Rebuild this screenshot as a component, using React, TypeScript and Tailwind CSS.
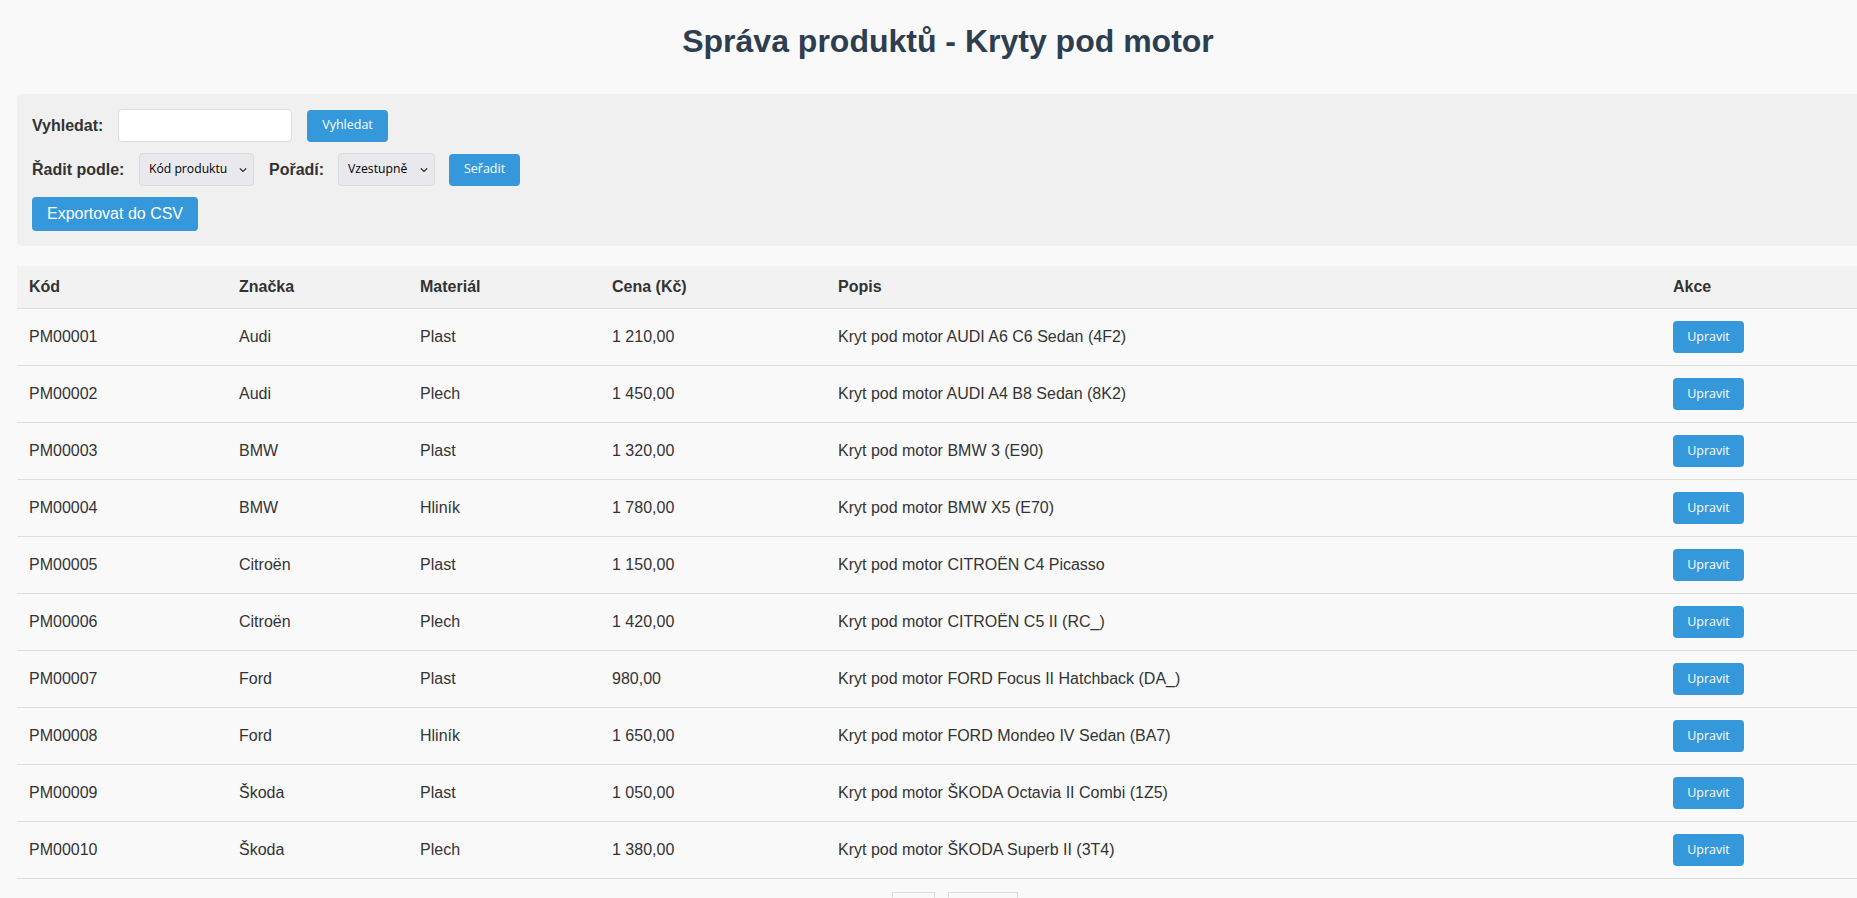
import React from "react";

const rows = [
  ["PM00001", "Audi", "Plast", "1 210,00", "Kryt pod motor AUDI A6 C6 Sedan (4F2)"],
  ["PM00002", "Audi", "Plech", "1 450,00", "Kryt pod motor AUDI A4 B8 Sedan (8K2)"],
  ["PM00003", "BMW", "Plast", "1 320,00", "Kryt pod motor BMW 3 (E90)"],
  ["PM00004", "BMW", "Hliník", "1 780,00", "Kryt pod motor BMW X5 (E70)"],
  ["PM00005", "Citroën", "Plast", "1 150,00", "Kryt pod motor CITROËN C4 Picasso"],
  ["PM00006", "Citroën", "Plech", "1 420,00", "Kryt pod motor CITROËN C5 II (RC_)"],
  ["PM00007", "Ford", "Plast", "980,00", "Kryt pod motor FORD Focus II Hatchback (DA_)"],
  ["PM00008", "Ford", "Hliník", "1 650,00", "Kryt pod motor FORD Mondeo IV Sedan (BA7)"],
  ["PM00009", "Škoda", "Plast", "1 050,00", "Kryt pod motor ŠKODA Octavia II Combi (1Z5)"],
  ["PM00010", "Škoda", "Plech", "1 380,00", "Kryt pod motor ŠKODA Superb II (3T4)"],
];

const colWidths = [210, 181, 192, 226, 835, 218];

function Chevron() {
  return (
    <svg width="8" height="5" viewBox="0 0 8 5" className="pointer-events-none absolute right-[7px] top-1/2 -translate-y-1/2">
      <path d="M0.8 0.8 L4 4 L7.2 0.8" fill="none" stroke="#222" strokeWidth="1.2" />
    </svg>
  );
}

function SmallButton({ children, w }: { children: React.ReactNode; w: string }) {
  return (
    <button
      className={`h-8 ${w} rounded-[4px] bg-[#3498db] text-white text-[12.5px] font-['Open_Sans',sans-serif] flex items-center justify-center`}
    >
      {children}
    </button>
  );
}

export default function App() {
  return (
    <div className="h-[898px] w-full overflow-hidden bg-[#f9f9f9] font-['Liberation_Sans',Arial,sans-serif] text-[#333]">
      <div className="ml-[17px] w-[1862px]">
        <h1 className="pt-[23px] h-[60px] text-center text-[32px] leading-[37px] font-bold text-[#2c3e50]">
          Správa produktů - Kryty pod motor
        </h1>
        <div className="mt-[34px] rounded-[5px] bg-[#f0f0f0] px-[15px] pt-[15px] pb-[15px] flex flex-col gap-[11px]">
          <div className="flex items-center">
            <span className="text-[16px] font-bold w-[86px]">Vyhledat:</span>
            <input className="h-[33px] w-[174px] rounded-[4px] border border-[#ddd] bg-white" />
            <div className="ml-[15px]">
              <SmallButton w="w-[81px]">Vyhledat</SmallButton>
            </div>
          </div>
          <div className="flex items-center">
            <span className="text-[16px] font-bold w-[107px]">Řadit podle:</span>
            <div className="relative">
              <select className="appearance-none h-[33px] w-[115px] rounded-[4px] border border-[#dadada] bg-[#e9e9ed] pl-[9px] text-[12.2px] text-black font-['Open_Sans',sans-serif]">
                <option>Kód produktu</option>
              </select>
              <Chevron />
            </div>
            <span className="ml-[15px] text-[16px] font-bold w-[69px]">Pořadí:</span>
            <div className="relative">
              <select className="appearance-none h-[33px] w-[97px] rounded-[4px] border border-[#dadada] bg-[#e9e9ed] pl-[9px] text-[12.2px] text-black font-['Open_Sans',sans-serif]">
                <option>Vzestupně</option>
              </select>
              <Chevron />
            </div>
            <div className="ml-[14px]">
              <SmallButton w="w-[71px]">Seřadit</SmallButton>
            </div>
          </div>
          <div className="flex">
            <button className="h-[34px] w-[166px] rounded-[4px] bg-[#3498db] text-white text-[16px]">
              Exportovat do CSV
            </button>
          </div>
        </div>

        <table className="mt-[20px] w-[1862px] table-fixed border-collapse">
          <colgroup>
            {colWidths.map((w, i) => (
              <col key={i} style={{ width: w }} />
            ))}
          </colgroup>
          <thead>
            <tr className="bg-[#f2f2f2] border-b border-[#ddd]">
              {["Kód", "Značka", "Materiál", "Cena (Kč)", "Popis", "Akce"].map((h) => (
                <th key={h} className="px-[12px] py-[12px] text-left text-[16px] font-bold leading-[18px]">
                  {h}
                </th>
              ))}
            </tr>
          </thead>
          <tbody>
            {rows.map((r) => (
              <tr key={r[0]} className="border-b border-[#ddd] bg-[#f9f9f9]">
                {r.map((c, i) => (
                  <td key={i} className="px-[12px] py-[12px] text-[16px] leading-[18px] align-middle">
                    {c}
                  </td>
                ))}
                <td className="px-[12px] py-[12px] align-middle">
                  <SmallButton w="w-[71px]">Upravit</SmallButton>
                </td>
              </tr>
            ))}
          </tbody>
        </table>

        <div className="mt-[13px] flex justify-center gap-[13px] pl-[14px]">
          <div className="h-[34px] w-[43px] border border-[#ddd] bg-[#f9f9f9]" />
          <div className="h-[34px] w-[70px] border border-[#ddd] bg-[#f9f9f9]" />
        </div>
      </div>
    </div>
  );
}
